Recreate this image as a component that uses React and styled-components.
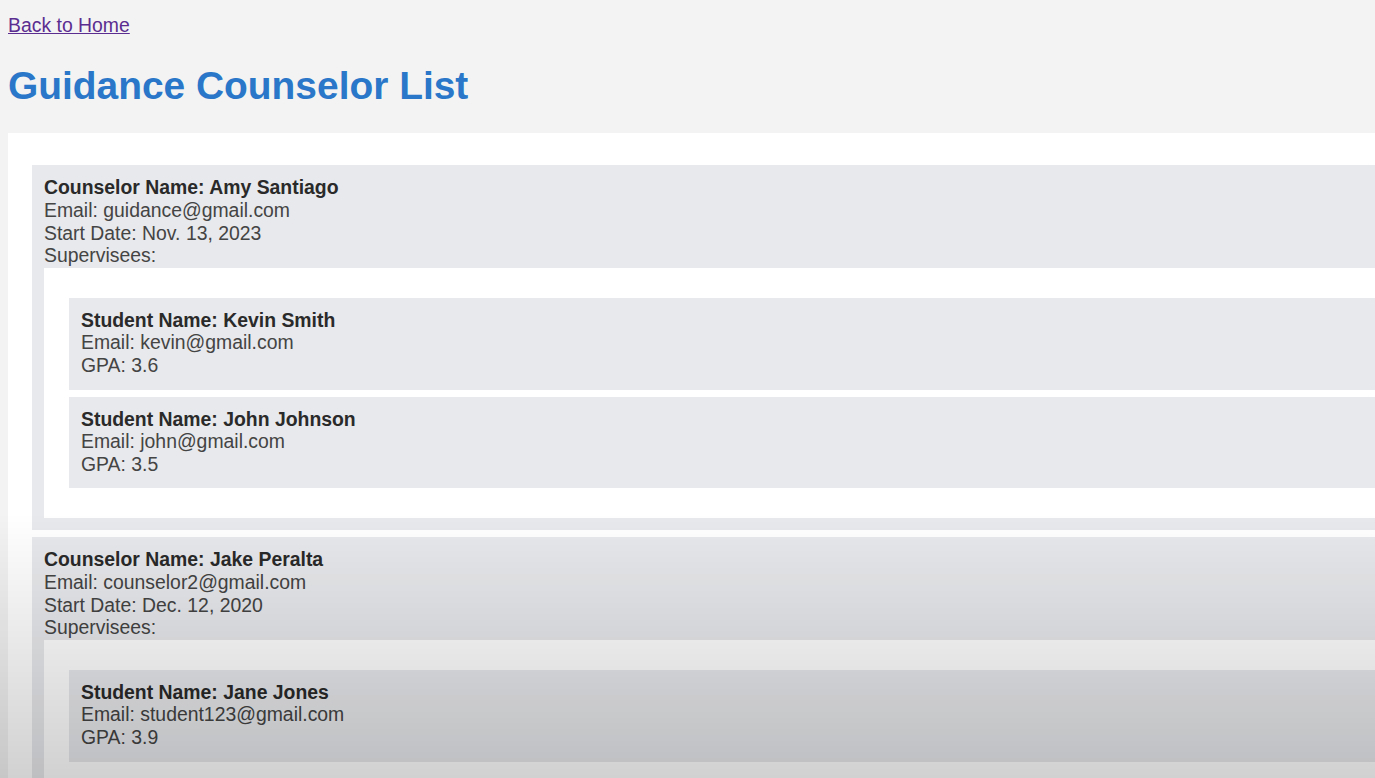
import React from "react";
import styled, { createGlobalStyle } from "styled-components";

const counselors = [
  {
    name: "Amy Santiago",
    email: "guidance@gmail.com",
    start: "Nov. 13, 2023",
    students: [
      { name: "Kevin Smith", email: "kevin@gmail.com", gpa: "3.6" },
      { name: "John Johnson", email: "john@gmail.com", gpa: "3.5" },
    ],
  },
  {
    name: "Jake Peralta",
    email: "counselor2@gmail.com",
    start: "Dec. 12, 2020",
    students: [
      { name: "Jane Jones", email: "student123@gmail.com", gpa: "3.9" },
    ],
  },
];

const GlobalStyle = createGlobalStyle`
  html, body {
    margin: 0;
    padding: 0;
    overflow: hidden;
    background-color: #f3f3f3;
  }
  body {
    font-family: "Liberation Sans", Arial, sans-serif;
  }
`;

const Page = styled.div`
  width: 1500px;
  padding: 14px 0 0 8px;
  font-family: "Liberation Sans", Arial, sans-serif;
`;

const HomeLink = styled.a`
  display: inline-block;
  font-size: 19.4px;
  line-height: 22.4px;
  color: #5b2d90;
  text-decoration: underline;
`;

const Title = styled.h1`
  margin: 27px 0 25px;
  font-size: 38.9px;
  line-height: 45px;
  font-weight: 700;
  color: #2a77c9;
`;

const ListPanel = styled.div`
  background-color: #ffffff;
  padding: 32px 0 40px 24px;
  display: flex;
  flex-direction: column;
  gap: 7px;
`;

const CounselorCard = styled.div`
  background-color: #e8e9ec;
  padding: 11px 0 12px 12px;
`;

const Line = styled.div`
  font-size: 19.4px;
  line-height: 22.6px;
  color: ${(p) => (p.$bold ? "#2a2a2a" : "#444444")};
  font-weight: ${(p) => (p.$bold ? 700 : 400)};
  white-space: nowrap;
`;

const Supervisees = styled.div`
  margin-top: 1px;
  background-color: #ffffff;
  padding: 30px 0 30px 25px;
  display: flex;
  flex-direction: column;
  gap: 7px;
`;

const StudentCard = styled.div`
  background-color: #e8e9ec;
  padding: 11px 0 13px 12px;
`;

const Shade = styled.div`
  position: fixed;
  inset: 0;
  pointer-events: none;
  background: linear-gradient(
    to bottom,
    rgba(0, 0, 0, 0) 0%,
    rgba(0, 0, 0, 0) 66%,
    rgba(0, 0, 0, 0.18) 100%
  );
`;

const App = () => {
  return (
    <>
      <GlobalStyle />
      <Page>
        <HomeLink href="#">Back to Home</HomeLink>
        <Title>Guidance Counselor List</Title>
        <ListPanel>
          {counselors.map((c) => (
            <CounselorCard key={c.name}>
              <Line $bold>Counselor Name: {c.name}</Line>
              <Line>Email: {c.email}</Line>
              <Line>Start Date: {c.start}</Line>
              <Line>Supervisees:</Line>
              <Supervisees>
                {c.students.map((s) => (
                  <StudentCard key={s.name}>
                    <Line $bold>Student Name: {s.name}</Line>
                    <Line>Email: {s.email}</Line>
                    <Line>GPA: {s.gpa}</Line>
                  </StudentCard>
                ))}
              </Supervisees>
            </CounselorCard>
          ))}
        </ListPanel>
      </Page>
      <Shade />
    </>
  );
};

export default App;
